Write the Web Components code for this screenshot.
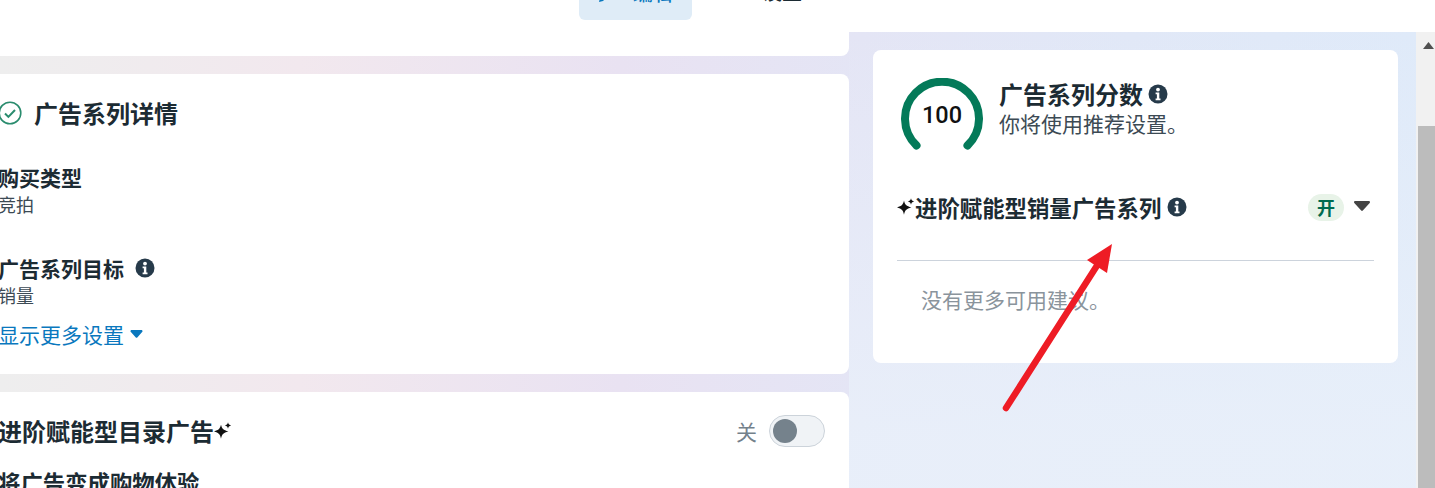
<!DOCTYPE html>
<html lang="zh">
<head>
<meta charset="utf-8">
<title>广告系列</title>
<style>
    html, body {
        margin: 0;
        height: 100%;
        overflow: hidden;
    }
    body {
        font-family: "Noto Sans CJK SC", "Noto Sans", sans-serif;
        color: #1c2b33;
    }
</style>
</head>
<body>
<ad-page>
    <ad-tab slot="tabs" active>
        <svg slot="icon" style="margin-top:6px" width="14" height="14" viewBox="0 0 14 14"><path fill="#0a78be" d="M1 13l1-4 7-7 3 3-7 7z"/></svg>
        编辑
    </ad-tab>
    <ad-tab slot="tabs">
        <svg slot="icon" style="margin-top:4px" width="14" height="14" viewBox="0 0 14 14"><circle cx="7" cy="7" r="5" fill="none" stroke="#666" stroke-width="2"/></svg>
        设置
    </ad-tab>

    <ad-card slot="left" stub></ad-card>

    <ad-card slot="left" style="height:300px">
        <ad-heading>
            <svg slot="before" width="24" height="24" viewBox="0 0 24 24" fill="none" stroke="#2a8c6e"><circle cx="12" cy="12" r="10.8" stroke-width="1.6"/><path d="M7 12.5l3.4 3.4L17 9" stroke-width="2"/></svg>
            广告系列详情
        </ad-heading>
        <ad-field style="margin-top:34px" label="购买类型" value="竞拍"></ad-field>
        <ad-field style="margin-top:36px" label="广告系列目标" value="销量" info></ad-field>
        <show-more>显示更多设置</show-more>
    </ad-card>

    <ad-card slot="left" style="height:200px">
        <ad-heading>
            进阶赋能型目录广告<spark-icon slot="after"></spark-icon>
            <ad-toggle slot="end" label="关"></ad-toggle>
        </ad-heading>
        <ad-field style="margin-top:21px" label="将广告变成购物体验" big></ad-field>
    </ad-card>

    <score-card slot="right"></score-card>
</ad-page>
<red-arrow></red-arrow>

<script>
const infoMarkup = `<svg width="20" height="20" viewBox="0 0 20 20"><circle cx="10" cy="10" r="9.5" fill="#263a4a"/><circle cx="10" cy="5.6" r="1.9" fill="#fff"/><path fill="#fff" d="M7.6 8.6h3.7v6h1.2v1.6H7.6v-1.6h1.3v-4.4H7.6z"/></svg>`;

class InfoIcon extends HTMLElement {
    constructor() {
        super();
        this.attachShadow({mode: "open"}).innerHTML = `
            <style>:host { display: inline-flex; flex: none; }</style>${infoMarkup}`;
    }
}
customElements.define("info-icon", InfoIcon);

class SparkIcon extends HTMLElement {
    constructor() {
        super();
        this.attachShadow({mode: "open"}).innerHTML = `
            <style>:host { display: inline-flex; flex: none; }</style>
            <svg width="18" height="18" viewBox="0 0 18 18"><path fill="#111" d="M7 2.6C7.9 6.8 9.2 8.2 14.4 9.5 9.2 10.8 7.9 12.2 7 16.8 6.1 12.2 4.8 10.8-.4 9.5 4.8 8.2 6.1 6.8 7 2.6z"/><path fill="#111" d="M14 .3c.4 1.9 1.1 2.6 3.2 3.2-2.1.6-2.8 1.3-3.2 3.2-.4-1.9-1.1-2.6-3.2-3.2 2.1-.6 2.8-1.3 3.2-3.2z"/></svg>`;
    }
}
customElements.define("spark-icon", SparkIcon);

const pageTemplate = document.createElement("template");
pageTemplate.innerHTML = `
    <style>
        :host {
            display: flex;
            flex-direction: column;
            height: 488px;
            overflow: hidden;
        }
        #header {
            flex: none;
            height: 32px;
            background: #fff;
            display: flex;
            justify-content: flex-start;
            align-items: flex-end;
            padding: 0 0 12px 579px;
            box-sizing: border-box;
        }
        #body {
            flex: 1;
            min-height: 0;
            display: flex;
            overflow: hidden;
            background:
                linear-gradient(to bottom, rgba(233,240,250,0) 0, rgba(233,240,250,.85) 90%) right top / 586px 100% no-repeat,
                linear-gradient(to right, #eeeeee 0, #f2e8ee 300px, #e9e2f2 620px, #e4e5f5 860px, #e1e8f7 1130px, #dfeaf9 1416px);
        }
        #columns {
            flex: 1;
            display: grid;
            grid-template-columns: 849px 525px;
            column-gap: 24px;
            align-items: start;
        }
        #left {
            display: flex;
            flex-direction: column;
            gap: 18px;
        }
        #right {
            padding-top: 18px;
        }
    </style>
    <div id="header"><slot name="tabs"></slot></div>
    <div id="body">
        <div id="columns">
            <div id="left"><slot name="left"></slot></div>
            <div id="right"><slot name="right"></slot></div>
        </div>
        <fake-scrollbar></fake-scrollbar>
    </div>
`;

class AdPage extends HTMLElement {
    constructor() {
        super();
        this.attachShadow({mode: "open"}).appendChild(pageTemplate.content.cloneNode(true));
    }
}

class FakeScrollbar extends HTMLElement {
    constructor() {
        super();
        this.attachShadow({mode: "open"}).innerHTML = `
            <style>
                :host {
                    display: flex;
                    flex-direction: column;
                    flex: none;
                    width: 19px;
                    background: #f1f1f1;
                }
                #up {
                    height: 94px;
                    display: flex;
                    justify-content: center;
                    padding: 10px 0 0 5px;
                    box-sizing: border-box;
                }
                #up svg { display: block; }
                #thumb { flex: 1; margin-left: 2px; background: #bcbcbc; }
            </style>
            <div id="up"><svg width="11" height="7" viewBox="0 0 11 7"><path fill="#505050" d="M5.5 0L11 7H0z"/></svg></div>
            <div id="thumb"></div>`;
    }
}
customElements.define("fake-scrollbar", FakeScrollbar);

class AdTab extends HTMLElement {
    constructor() {
        super();
        this.attachShadow({mode: "open"}).innerHTML = `
            <style>
                :host {
                    display: inline-flex;
                    align-items: center;
                    height: 52px;
                    width: 113px;
                    margin-right: 34px;
                    box-sizing: border-box;
                    padding: 0 0 2px 19px;
                    gap: 21px;
                    border-radius: 6px;
                    font-size: 20px;
                    line-height: 26px;
                    font-weight: 500;
                    vertical-align: bottom;
                }
                :host([active]) { background: #dfecf7; color: #0a78be; }
                :host(:not([active])) { width: 90px; padding: 0 0 4px 1px; }
            </style>
            <slot name="icon"></slot><slot></slot>`;
    }
}
customElements.define("ad-tab", AdTab);

class AdCard extends HTMLElement {
    constructor() {
        super();
        this.attachShadow({mode: "open"}).innerHTML = `
            <style>
                :host {
                    display: block;
                    background: #fff;
                    border-radius: 8px;
                    margin-left: -20px;
                    padding: 23px 24px 0 18px;
                    box-sizing: border-box;
                    overflow: hidden;
                }
                :host([stub]) {
                    height: 24px;
                    padding: 0;
                    border-radius: 0 0 8px 8px;
                }
            </style>
            <slot></slot>`;
    }
}
customElements.define("ad-card", AdCard);

class AdHeading extends HTMLElement {
    constructor() {
        super();
        this.attachShadow({mode: "open"}).innerHTML = `
            <style>
                :host {
                    display: flex;
                    align-items: center;
                    height: 32px;
                    font-size: 24px;
                    line-height: 32px;
                    font-weight: 700;
                    color: #1c2b33;
                }
                slot[name=before]::slotted(*) { margin-right: 12px; margin-left: 0; }
                #end { margin-left: auto; }
            </style>
            <slot name="before"></slot><slot></slot><slot name="after"></slot>
            <div id="end"><slot name="end"></slot></div>`;
    }
}
customElements.define("ad-heading", AdHeading);

class AdField extends HTMLElement {
    constructor() {
        super();
        const label = this.getAttribute("label");
        const value = this.getAttribute("value");
        const info = this.hasAttribute("info") ? `<info-icon></info-icon>` : "";
        this.attachShadow({mode: "open"}).innerHTML = `
            <style>
                :host { display: block; }
                #label {
                    display: flex;
                    align-items: center;
                    gap: 11px;
                    height: 28px;
                    font-size: 21px;
                    line-height: 28px;
                    font-weight: 700;
                    color: #1c2b33;
                }
                :host([big]) #label { font-size: 22.4px; }
                #value {
                    font-size: 18px;
                    line-height: 27px;
                    color: #3c4a54;
                }
            </style>
            <div id="label">${label}${info}</div>
            ${value ? `<div id="value">${value}</div>` : ""}`;
    }
}
customElements.define("ad-field", AdField);

class ShowMore extends HTMLElement {
    constructor() {
        super();
        this.attachShadow({mode: "open"}).innerHTML = `
            <style>
                :host {
                    display: flex;
                    align-items: center;
                    gap: 6px;
                    margin-top: 12px;
                    height: 26px;
                    font-size: 21px;
                    line-height: 26px;
                    color: #0a78be;
                }
            </style>
            <slot></slot>
            <svg width="13" height="8" viewBox="0 0 13 8"><path fill="#0a78be" d="M.5 1.2C.5.5 1 0 1.7 0h9.6c.7 0 1.2.5 1.2 1.2 0 .3-.1.6-.4.8L7.3 7.4c-.4.4-1.1.4-1.5 0L.9 2c-.3-.2-.4-.5-.4-.8z"/></svg>`;
    }
}
customElements.define("show-more", ShowMore);

class AdToggle extends HTMLElement {
    constructor() {
        super();
        this.attachShadow({mode: "open"}).innerHTML = `
            <style>
                :host {
                    display: flex;
                    align-items: center;
                    gap: 12px;
                    font-size: 21px;
                    font-weight: 400;
                    color: #74818b;
                }
                #track {
                    width: 56px;
                    height: 32px;
                    box-sizing: border-box;
                    border: 1px solid #ccd3da;
                    border-radius: 16px;
                    background: #f0f3f6;
                    display: flex;
                    align-items: center;
                    padding-left: 3px;
                }
                #knob {
                    width: 24px;
                    height: 24px;
                    border-radius: 50%;
                    background: #75828c;
                }
            </style>
            <span>${this.getAttribute("label")}</span>
            <div id="track"><div id="knob"></div></div>`;
    }
}
customElements.define("ad-toggle", AdToggle);

class ScoreGauge extends HTMLElement {
    constructor() {
        super();
        this.attachShadow({mode: "open"}).innerHTML = `
            <style>
                :host {
                    display: block;
                    position: relative;
                    width: 82px;
                    height: 72px;
                    flex: none;
                }
                svg { display: block; }
                #num {
                    position: absolute;
                    left: 0;
                    right: 0;
                    top: 21px;
                    text-align: center;
                    font: 500 23.5px/32px Roboto, sans-serif;
                    color: #111;
                }
            </style>
            <svg width="82" height="72" viewBox="0 0 82 72"><path d="M15.5 67.5A37 37 0 1 1 66.5 67.5" fill="none" stroke="#047a59" stroke-width="8" stroke-linecap="round"/></svg>
            <div id="num">${this.getAttribute("value")}</div>`;
    }
}
customElements.define("score-gauge", ScoreGauge);

const scoreTemplate = document.createElement("template");
scoreTemplate.innerHTML = `
    <style>
        :host {
            display: block;
            height: 313px;
            background: #fff;
            border-radius: 8px;
            box-sizing: border-box;
            padding: 28px 24px 0;
        }
        #top {
            display: flex;
            gap: 16px;
            padding-left: 4px;
        }
        #title {
            display: flex;
            align-items: center;
            gap: 5px;
            height: 32px;
            font-size: 24px;
            line-height: 32px;
            font-weight: 700;
        }
        #sub {
            margin-top: -1px;
            font-size: 21px;
            line-height: 28px;
            color: #3c4a54;
        }
        #row {
            display: flex;
            align-items: center;
            height: 36px;
            margin-top: 39px;
            font-size: 22.4px;
            font-weight: 700;
        }
        #row info-icon { margin-left: 6px; }
        #pill {
            margin-left: auto;
            width: 36px;
            height: 27px;
            border-radius: 14px;
            background: #e8f3e8;
            color: #006b4f;
            font-size: 18px;
            line-height: 27px;
            font-weight: 700;
            text-align: center;
        }
        #caret { margin: 0 4px 2px 10px; display: block; }
        #rule {
            height: 1px;
            margin-top: 35px;
            background: #ccd3dc;
        }
        #none {
            margin: 24px 0 0 24px;
            font-size: 21px;
            line-height: 28px;
            color: #8a949c;
        }
    </style>
    <div id="top">
        <score-gauge value="100"></score-gauge>
        <div>
            <div id="title">广告系列分数<info-icon></info-icon></div>
            <div id="sub">你将使用推荐设置。</div>
        </div>
    </div>
    <div id="row">
        <spark-icon></spark-icon>进阶赋能型销量广告系列<info-icon></info-icon>
        <div id="pill">开</div>
        <svg id="caret" width="16" height="10" viewBox="0 0 16 10"><path fill="#444" d="M1.2 0h13.6c1 0 1.5 1.1.9 1.9L8.8 9.6c-.4.5-1.2.5-1.6 0L.3 1.9C-.3 1.1.2 0 1.2 0z"/></svg>
    </div>
    <div id="rule"></div>
    <div id="none">没有更多可用建议。</div>
`;

class ScoreCard extends HTMLElement {
    constructor() {
        super();
        this.attachShadow({mode: "open"}).appendChild(scoreTemplate.content.cloneNode(true));
    }
}
customElements.define("score-card", ScoreCard);

// annotation drawn over the page
class RedArrow extends HTMLElement {
    constructor() {
        super();
        this.attachShadow({mode: "open"}).innerHTML = `
            <style>
                :host { position: absolute; left: 0; top: 0; pointer-events: none; }
                svg { display: block; }
            </style>
            <svg width="1435" height="488" viewBox="0 0 1435 488">
                <path d="M1006 408L1098 264" stroke="#ee1c25" stroke-width="6.5" stroke-linecap="round" fill="none"/>
                <path d="M1112 244L1087 260L1107 273z" fill="#ee1c25"/>
            </svg>`;
    }
}
customElements.define("red-arrow", RedArrow);

customElements.define("ad-page", AdPage);
</script>
</body>
</html>
